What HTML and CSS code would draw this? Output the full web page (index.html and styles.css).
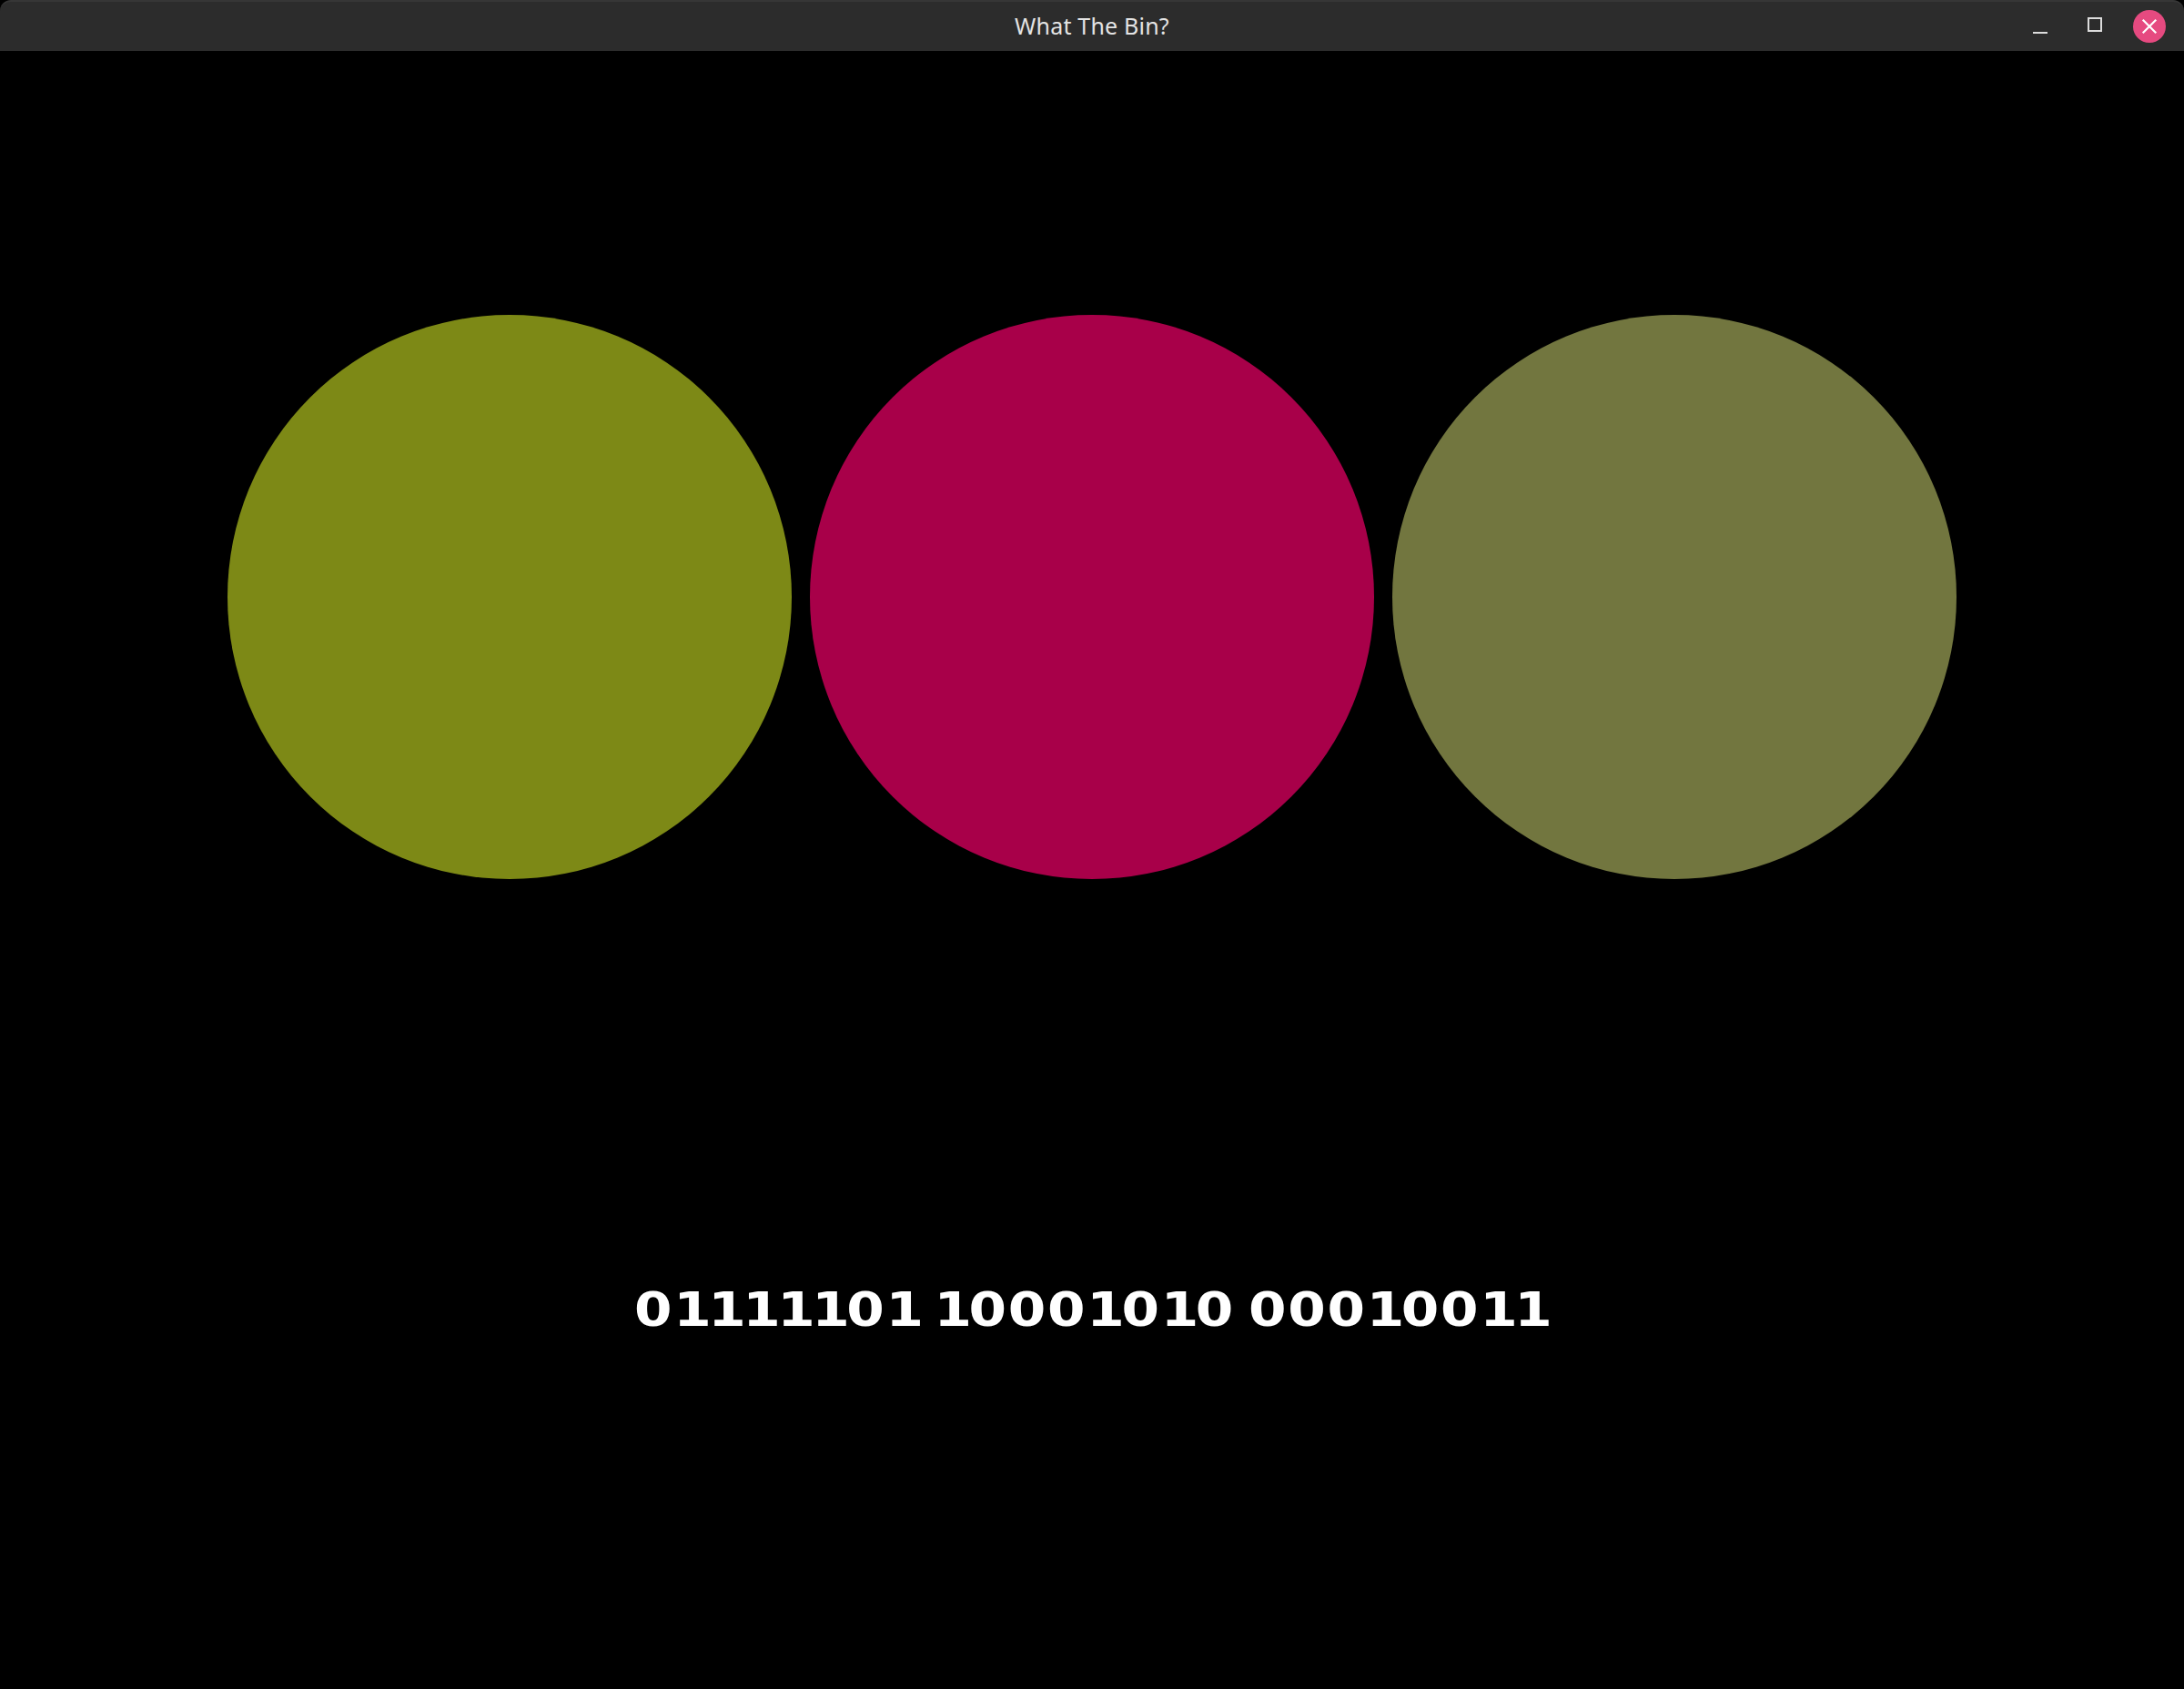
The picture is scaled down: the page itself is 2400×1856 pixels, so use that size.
FILE: index.html
```html
<!DOCTYPE html>
<html>
<head>
<meta charset="utf-8">
<title>What The Bin?</title>
<link rel="stylesheet" href="styles.css">
</head>
<body>
<div class="window">
  <header class="titlebar">
    <div class="tb-left"></div>
    <div class="tb-title">What The Bin?</div>
    <div class="tb-controls">
      <span class="btn btn-min"><svg width="16" height="16" viewBox="0 0 16 16"><rect x="0" y="12" width="16" height="2" fill="#dcdcdc"/></svg></span>
      <span class="btn btn-max"><svg width="16" height="16" viewBox="0 0 16 16"><rect x="1" y="1" width="14" height="14" fill="none" stroke="#dcdcdc" stroke-width="2"/></svg></span>
      <span class="btn btn-close"><svg width="36" height="36" viewBox="0 0 36 36"><circle cx="18" cy="18" r="18" fill="#e64a80"/><path d="M11.5 11.5 L24.5 24.5 M24.5 11.5 L11.5 24.5" stroke="#ffffff" stroke-width="2.2" stroke-linecap="square"/></svg></span>
    </div>
  </header>
  <main class="content">
    <div class="circles">
      <div class="circle c-green"></div>
      <div class="circle c-pink"></div>
      <div class="circle c-olive"></div>
    </div>
    <div class="binary"><span class="binary-text"><span class="z">0</span>11111<span class="z">0</span>1 1<span class="z">000</span>1<span class="z">0</span>1<span class="z">0</span> <span class="z">000</span>1<span class="z">00</span>11</span></div>
  </main>
</div>
</body>
</html>
```
FILE: styles.css
```css
html, body {
  margin: 0;
  padding: 0;
  background: #000000;
}
.window {
  width: 2400px;
  height: 1856px;
  display: flex;
  flex-direction: column;
  background: #000000;
  overflow: hidden;
}
.titlebar {
  height: 56px;
  flex: 0 0 56px;
  box-sizing: border-box;
  background: #2c2c2c;
  border-top: 2px solid #363636;
  border-radius: 12px 12px 0 0;
  display: grid;
  grid-template-columns: 1fr auto 1fr;
  align-items: center;
}
.tb-title {
  font-family: "Noto Sans", "Open Sans", sans-serif;
  font-size: 25px;
  color: #e4e4e4;
  letter-spacing: 0.2px;
  margin-top: -2px;
}
.tb-controls {
  display: flex;
  justify-content: flex-end;
  align-items: center;
  padding-right: 20px;
}
.btn {
  display: flex;
  align-items: center;
  justify-content: center;
}
.btn-min { margin-right: 44px; margin-top: 4px; }
.btn-max { margin-right: 34px; margin-top: -4px; }
.btn-close { margin-top: 0px; }
.content {
  flex: 1;
  display: flex;
  flex-direction: column;
  align-items: center;
}
.circles {
  display: flex;
  gap: 20px;
  margin-top: 290px;
}
.circle {
  width: 620px;
  height: 620px;
  border-radius: 50%;
}
.c-green { background: #7d8916; }
.c-pink { background: #a80049; }
.c-olive { background: #72763f; }
.binary {
  margin-top: 448px;
  font-family: "DejaVu Sans", sans-serif;
  font-weight: bold;
  font-size: 51px;
  line-height: 1;
  color: #ffffff;
  white-space: nowrap;
}
.binary-text {
  display: inline-block;
  transform: scaleX(1.17);
  word-spacing: -2px;
  letter-spacing: -3px;
}
.binary-text .z {
  letter-spacing: 1.5px;
}
```
